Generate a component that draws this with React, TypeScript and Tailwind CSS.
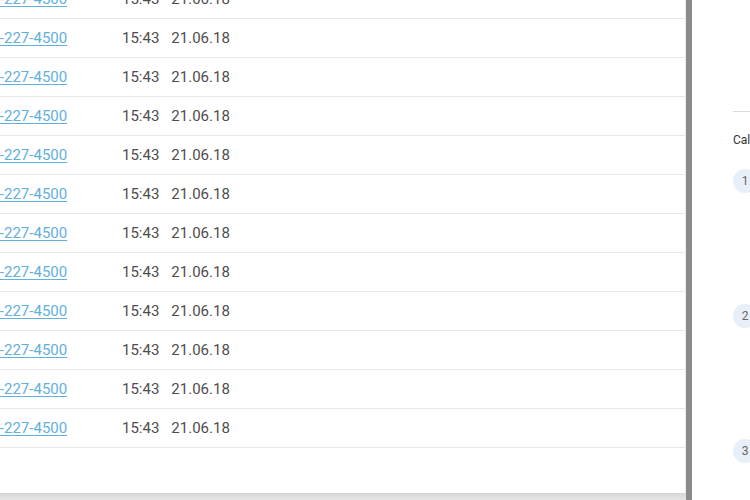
const rows = Array.from({ length: 12 }, () => ({
  phone: "8-800-227-4500",
  time: "15:43",
  date: "21.06.18",
}));

export default function App() {
  return (
    <div
      className="flex h-[500px] w-[750px] overflow-hidden bg-white"
      style={{ fontFamily: "Roboto, 'Liberation Sans', sans-serif" }}
    >
      {/* calls list */}
      <div className="flex w-[686px] shrink-0 flex-col bg-[#e6e6e6]">
        <div className="h-[493px] overflow-hidden border-r border-[#ececec] bg-white">
          <div className="-ml-[38px] -mt-[20px]">
            {rows.map((r, i) => (
              <div
                key={i}
                className="flex h-[39px] items-center border-b border-[#e8e8e8] text-[15px]"
              >
                <div className="w-[160px] shrink-0">
                  <a href="#" className="text-[#62b0dc] underline underline-offset-2">
                    {r.phone}
                  </a>
                </div>
                <span className="text-[#4d4d4d]">{r.time}</span>
                <span className="ml-3 text-[#4d4d4d]">{r.date}</span>
              </div>
            ))}
          </div>
        </div>
        <div className="flex-1 bg-gradient-to-b from-[#d6d6d6] to-[#e6e6e6]" />
      </div>

      {/* splitter */}
      <div className="w-[6px] shrink-0 bg-[#8b8b8b]" />

      {/* side panel */}
      <div className="flex-1 overflow-hidden pl-[41px]">
        <div className="mt-[111px] h-px w-[40px] bg-[#dcdcdc]" />
        <div className="mt-[19px] whitespace-nowrap text-[12px] leading-[18px] text-[#333]">
          Calls
        </div>
        <div className="mt-[20px] flex flex-col gap-[111px]">
          {[1, 2, 3].map((n) => (
            <div
              key={n}
              className="flex h-6 w-6 items-center justify-center rounded-full bg-[#e7eff8] text-[12px] text-[#666]"
            >
              {n}
            </div>
          ))}
        </div>
      </div>
    </div>
  );
}
